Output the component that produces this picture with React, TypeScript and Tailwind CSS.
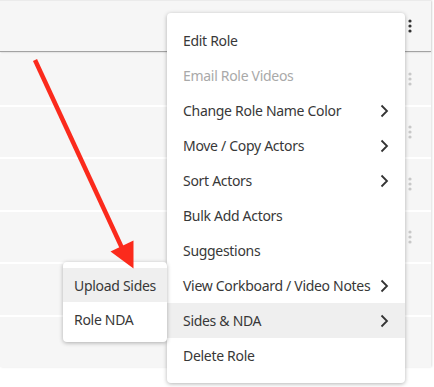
import React from "react";

const font = { fontFamily: '"Noto Sans", "Open Sans", sans-serif' };

function Dots({ color }: { color: string }) {
  return (
    <svg width="4" height="14" viewBox="0 0 4 14">
      <circle cx="2" cy="2" r="1.6" fill={color} />
      <circle cx="2" cy="7" r="1.6" fill={color} />
      <circle cx="2" cy="12" r="1.6" fill={color} />
    </svg>
  );
}

function Chevron() {
  return (
    <svg width="10" height="14" viewBox="0 0 10 14" className="shrink-0">
      <path d="M2.5 1.5 L8 7 L2.5 12.5" fill="none" stroke="#333" strokeWidth="1.8" />
    </svg>
  );
}

const items: { label: string; disabled?: boolean; sub?: boolean; active?: boolean }[] = [
  { label: "Edit Role" },
  { label: "Email Role Videos", disabled: true },
  { label: "Change Role Name Color", sub: true },
  { label: "Move / Copy Actors", sub: true },
  { label: "Sort Actors", sub: true },
  { label: "Bulk Add Actors" },
  { label: "Suggestions" },
  { label: "View Corkboard / Video Notes", sub: true },
  { label: "Sides & NDA", sub: true, active: true },
  { label: "Delete Role" },
];

export default function App() {
  return (
    <div className="relative w-[434px] h-[387px] bg-white overflow-hidden" style={font}>
      <div className="w-[431px] flex flex-col gap-[2px] shadow-[1px_0_2px_rgba(0,0,0,0.12)]">
        <div className="h-[52px] bg-[#f6f6f6] border-t border-[#ebebeb] border-b border-b-[#a3a3a3] shadow-[0_1px_2px_rgba(0,0,0,0.15)] flex items-center justify-end pr-[19px]">
          <Dots color="#333" />
        </div>
        {[0, 1, 2, 3, 4, 5].map((i) => (
          <div key={i} className="h-[50.5px] bg-[#f6f6f6] flex items-center justify-end pr-[19px]">
            {i < 4 ? <Dots color="#c8c8c8" /> : null}
          </div>
        ))}
      </div>

      {/* Main menu */}
      <div className="absolute left-[167px] top-[13px] w-[238px] bg-white rounded-[4px] shadow-[0_1px_4px_rgba(0,0,0,0.3)] py-[10px]">
        {items.map((it) => (
          <div
            key={it.label}
            className={
              "h-[35px] flex items-center justify-between pl-[16px] pr-[16px] text-[14px] tracking-[-0.3px] " +
              (it.active ? "bg-[#efefef] " : "") +
              (it.disabled ? "text-[#a9a9a9]" : "text-[#383838]")
            }
          >
            <span>{it.label}</span>
            {it.sub ? <Chevron /> : null}
          </div>
        ))}
      </div>

      {/* Submenu */}
      <div className="absolute left-[63px] top-[262px] w-[104px] bg-white rounded-[4px] shadow-[0_1px_4px_rgba(0,0,0,0.3)] py-[6px]">
        <div className="h-[34px] flex items-center pl-[11px] text-[14px] tracking-[-0.3px] text-[#383838] bg-[#efefef]">Upload Sides</div>
        <div className="h-[34px] flex items-center pl-[11px] text-[14px] tracking-[-0.3px] text-[#383838]">Role NDA</div>
      </div>

      {/* Red annotation arrow */}
      <svg className="absolute left-0 top-0 pointer-events-none" width="434" height="387" viewBox="0 0 434 387">
        <line x1="35" y1="60" x2="122" y2="248" stroke="#fb2a1c" strokeWidth="4.5" />
        <polygon points="110.5,251.5 133.5,240.5 133.5,268.5" fill="#fb2a1c" />
      </svg>
    </div>
  );
}
